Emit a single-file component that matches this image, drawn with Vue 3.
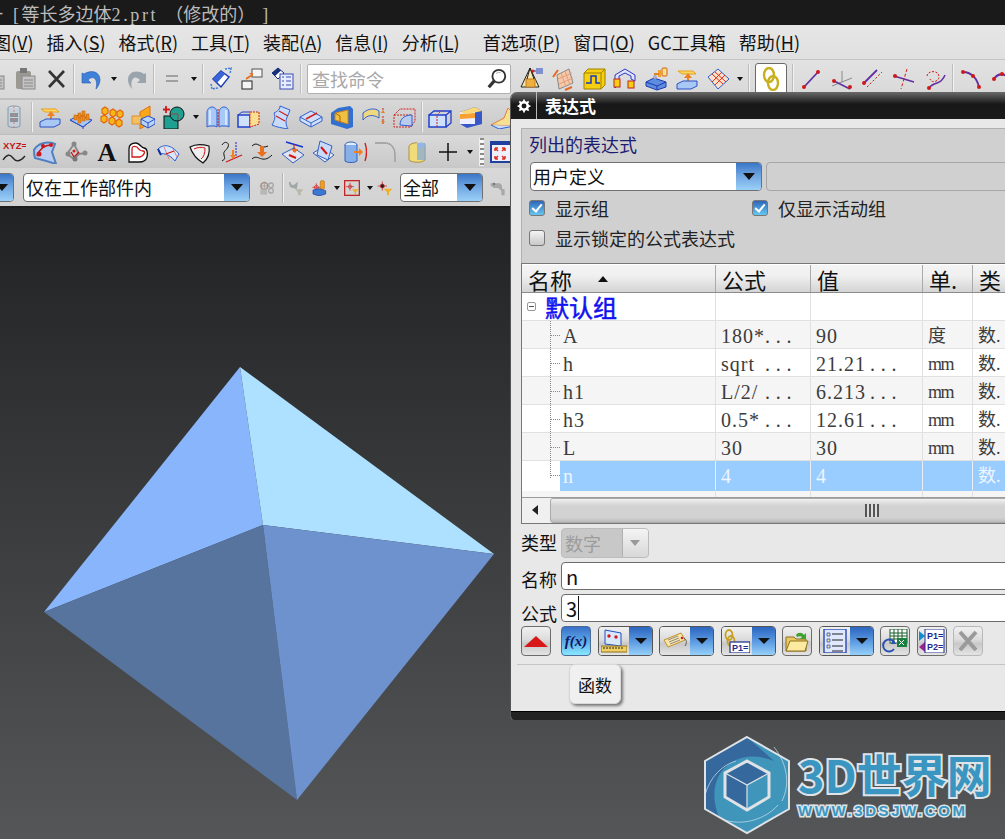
<template>
  <div class="app">
    <div class="titlebar">
      <span class="dash">-</span>
      <span class="title-text"><span class="lat">[</span>等长多边体<span class="lat">2.prt </span>（修改的）<span class="lat">  ]</span></span>
    </div>

    <div class="menubar">
      <span v-for="m in menus" :key="m.t" class="menu-item" :class="{ far: m.far }">{{ m.t }}<template v-if="m.k">(<u>{{ m.k }}</u>)</template></span>
    </div>

    <div class="toolrow row1">
      <template v-for="(it, i) in row1" :key="i">
        <span v-if="it === 'sep'" class="sep"></span>
        <span v-else-if="it === 'drop'" class="drop"></span>
        <div v-else-if="it === 'search'" class="search">
          <span>查找命令</span>
          <svg class="search-ic" viewBox="0 0 24 24">
            <circle cx="14" cy="9" r="7" fill="#fff" stroke="#333" stroke-width="2"/>
            <path d="M9 14 3 21" stroke="#333" stroke-width="3.5"/>
            <path d="M11 6a5 5 0 0 1 5-1" stroke="#aaa" fill="none"/>
          </svg>
        </div>
        <span v-else-if="it === 'chain'" class="chain-btn">
          <svg class="ic" viewBox="0 0 24 24" v-html="icons.chain"></svg>
        </span>
        <svg v-else class="ic" viewBox="0 0 24 24" v-html="icons[it]"></svg>
      </template>
    </div>

    <div class="toolrow row2">
      <template v-for="(it, i) in row2" :key="i">
        <span v-if="it === 'sep'" class="sep"></span>
        <span v-else-if="it === 'drop'" class="drop"></span>
        <svg v-else class="ic" viewBox="0 0 24 24" v-html="icons[it]"></svg>
      </template>
    </div>

    <div class="toolrow row3">
      <template v-for="(it, i) in row3" :key="i">
        <span v-if="it === 'grip'" class="grip"></span>
        <span v-else-if="it === 'drop'" class="drop"></span>
        <svg v-else class="ic" viewBox="0 0 24 24" v-html="icons[it]"></svg>
      </template>
    </div>

    <div class="filterrow">
      <div class="combo combo-clip"><span class="combo-text"></span><span class="combo-arrow"></span></div>
      <div class="combo combo-main"><span class="combo-text">仅在工作部件内</span><span class="combo-arrow"></span></div>
      <svg class="ic16 first16" viewBox="0 0 24 24" v-html="icons.selGrey"></svg>
      <span class="sep4"></span>
      <svg class="ic16" viewBox="0 0 24 24" v-html="icons.selFilter"></svg>
      <svg class="ic16" viewBox="0 0 24 24" v-html="icons.selPart"></svg>
      <span class="drop"></span>
      <svg class="ic16" viewBox="0 0 24 24" v-html="icons.selBox"></svg>
      <span class="drop"></span>
      <svg class="ic16" viewBox="0 0 24 24" v-html="icons.selCross"></svg>
      <div class="combo combo-all"><span class="combo-text">全部</span><span class="combo-arrow"></span></div>
      <svg class="ic16" viewBox="0 0 24 24" v-html="icons.selGrey2"></svg>
    </div>

    <div class="viewport">
      <svg class="solid" viewBox="0 0 1005 631">
        <polygon points="240,159 44,404 263,317" fill="#88b5fb"/>
        <polygon points="240,159 494,346 263,317" fill="#aee1ff"/>
        <polygon points="44,404 297,592 263,317" fill="#57749e"/>
        <polygon points="494,346 297,592 263,317" fill="#6e92ce"/>
      </svg>

      <div class="logo">
        <svg class="logo-hex" viewBox="0 0 90 100">
          <polygon points="45,2 87,26 87,74 45,98 3,74 3,26" fill="#3f95ba"/>
          <path d="M45 2 3 26v48l14 8C8 60 12 38 30 27c14-8 30-6 42-1L45 2Z" fill="#35699e"/>
          <path d="M20 84c22 6 50-4 58-22l9-4v16L45 98Z" fill="#3f95ba"/>
          <path d="M3 60C8 42 20 30 34 26M72 12C86 30 88 50 80 66M20 84C40 92 64 84 76 70" stroke="#cfe3ee" stroke-width=".7" fill="none"/>
          <polygon points="45,2 87,26 87,74 45,98 3,74 3,26" fill="none" stroke="#dfe3e6" stroke-width="2"/>
          <polygon points="45,26 67,38 67,62 45,75 23,62 23,38" fill="#35699e"/>
          <polygon points="45,50 67,38 67,62 45,75" fill="#3f95ba"/>
          <polygon points="45,26 67,38 67,62 45,75 23,62 23,38" fill="none" stroke="#dfe3e6" stroke-width="3"/>
          <path d="M23 38 45 50 67 38M45 50v25" stroke="#dfe3e6" stroke-width="1.2" fill="none"/>
        </svg>
        <div class="logo-words">
          <div class="logo-name">3D世界网</div>
          <div class="logo-url">WWW.3DSJW.COM</div>
        </div>
      </div>
    </div>

    <div class="dialog">
      <div class="dlg-title">
        <svg class="gear" viewBox="0 0 24 24">
          <circle cx="12" cy="12" r="6.5" fill="none" stroke="#fff" stroke-width="4.5"/>
          <path d="M12 1v4M12 19v4M1 12h4M19 12h4M4 4l3 3M17 17l3 3M20 4l-3 3M7 17l-3 3" stroke="#fff" stroke-width="3"/>
        </svg>
        <span class="dlg-title-sep"></span>
        <span class="dlg-title-text">表达式</span>
      </div>

      <div class="dlg-body">
        <div class="group">
          <div class="group-label">列出的表达式</div>
          <div class="group-combos">
            <div class="combo combo-list"><span class="combo-text">用户定义</span><span class="combo-arrow"></span></div>
            <div class="combo-empty"></div>
          </div>
          <div class="checks">
            <label class="check check-a"><span class="box on"></span>显示组</label>
            <label class="check"><span class="box on"></span>仅显示活动组</label>
          </div>
          <div class="checks checks-2">
            <label class="check"><span class="box"></span>显示锁定的公式表达式</label>
          </div>
        </div>

        <div class="table">
          <div class="trow thead">
            <div class="cell">名称<span class="sort"></span></div>
            <div class="cell">公式</div>
            <div class="cell">值</div>
            <div class="cell">单.</div>
            <div class="cell">类</div>
          </div>
          <div class="trow">
            <div class="cell group-cell"><span class="expander"></span><span class="group-name">默认组</span></div>
            <div class="cell"></div><div class="cell"></div><div class="cell"></div><div class="cell"></div>
          </div>
          <div v-for="(r, i) in rows" :key="r.name" class="trow data" :class="{ alt: i % 2 === 0, selected: r.sel }">
            <div class="cell name-cell">
              <span class="tree-v" :class="{ last: r.sel }"></span><span class="tree-h"></span>
              <span class="name-text">{{ r.name }}</span>
            </div>
            <div class="cell"><span class="fx-main">{{ r.formula }}</span><span v-if="r.fMore" class="dots">...</span></div>
            <div class="cell"><span class="val-main">{{ r.value }}</span><span v-if="r.vMore" class="dots">...</span></div>
            <div class="cell c-unit">{{ r.unit }}</div>
            <div class="cell c-type">数.</div>
          </div>
          <div class="trow blank alt">
            <div class="cell"></div><div class="cell"></div><div class="cell"></div><div class="cell"></div><div class="cell"></div>
          </div>
          <div class="hscroll">
            <span class="scroll-left"></span>
            <div class="scroll-thumb"><span class="thumb-grip"></span></div>
          </div>
        </div>

        <div class="form-row type-row">
          <span class="form-label">类型</span>
          <div class="select-off"><span>数字</span><span class="select-off-arrow"></span></div>
        </div>
        <div class="form-row name-row">
          <span class="form-label">名称</span>
          <div class="field">n</div>
        </div>
        <div class="form-row formula-row">
          <span class="form-label">公式</span>
          <div class="field"><span>3</span><span class="caret"></span></div>
        </div>

        <div class="btnrow">
          <span class="btn"><span class="tri-up"></span></span>
          <span class="btn active fx">f(x)</span>
          <span class="split"><span class="split-l"><svg class="ic-btn" viewBox="0 0 26 24" v-html="icons.measure"></svg></span><span class="split-r"></span></span>
          <span class="split"><span class="split-l"><svg class="ic-btn" viewBox="0 0 26 24" v-html="icons.tag"></svg></span><span class="split-r"></span></span>
          <span class="split"><span class="split-l"><svg class="ic-btn" viewBox="0 0 26 24" v-html="icons.p1link"></svg></span><span class="split-r"></span></span>
          <span class="btn"><svg class="ic-btn" viewBox="0 0 26 24" v-html="icons.folder"></svg></span>
          <span class="split"><span class="split-l"><svg class="ic-btn" viewBox="0 0 26 24" v-html="icons.list"></svg></span><span class="split-r"></span></span>
          <span class="btn"><svg class="ic-btn" viewBox="0 0 26 24" v-html="icons.excel"></svg></span>
          <span class="btn"><svg class="ic-btn" viewBox="0 0 26 24" v-html="icons.p1p2"></svg></span>
          <span class="btn off"><svg class="ic-btn" viewBox="0 0 26 24" v-html="icons.xGrey"></svg></span>
        </div>
        <div class="dlg-rule"></div>
        <div class="tooltip">函数</div>
      </div>
      <div class="dlg-foot"></div>
    </div>
  </div>
</template>

<script setup>
const menus = [
  { t: '图', k: 'V' },
  { t: '插入', k: 'S' },
  { t: '格式', k: 'R' },
  { t: '工具', k: 'T' },
  { t: '装配', k: 'A' },
  { t: '信息', k: 'I' },
  { t: '分析', k: 'L' },
  { t: '首选项', k: 'P', far: true },
  { t: '窗口', k: 'O' },
  { t: 'GC工具箱' },
  { t: '帮助', k: 'H' },
];

const row1 = [
  'pasteGrey', 'pasteGrey', 'xDark', 'sep', 'undo', 'drop', 'redo', 'sep', 'eq', 'drop', 'sep',
  'orient', 'windows', 'layers', 'sep', 'search',
  'pyramid', 'surfMesh', 'yellowBox', 'blueFrame', 'extract', 'padUp', 'gridSurf', 'drop', 'sep', 'chain',
  'sep', 'line', 'csys', 'parallel', 'cross', 'spiral', 'sep', 'arc', 'arc2',
];
const row2 = [
  'cyl', 'sep', 'padUp', 'dots', 'oranges', 'plane', 'boolean', 'drop',
  'book', 'boxCut', 'sweep', 'slab', 'shell', 'trim', 'wire', 'sep', 'boxLine', 'boxBand', 'corner',
];
const row3 = [
  'xyz', 'surfPts', 'nodes', 'bigA', 'outline', 'patch', 'leaf', 'curveA', 'curveB', 'projA', 'projB',
  'cylArrow', 'fillet', 'cylYellow', 'plus', 'drop', 'grip', 'fit',
];

const rows = [
  { name: 'A', formula: '180*', fMore: true, value: '90', unit: '度' },
  { name: 'h', formula: 'sqrt', fMore: true, value: '21.21', vMore: true, unit: 'mm' },
  { name: 'h1', formula: 'L/2/', fMore: true, value: '6.213', vMore: true, unit: 'mm' },
  { name: 'h3', formula: '0.5*', fMore: true, value: '12.61', vMore: true, unit: 'mm' },
  { name: 'L', formula: '30', value: '30', unit: 'mm' },
  { name: 'n', formula: '4', value: '4', unit: '', sel: true },
];

const icons = {
  pasteGrey: '<rect x="3" y="4" width="15" height="18" rx="2" fill="#9a9a92"/><rect x="7" y="1" width="7" height="5" fill="#777"/><rect x="9" y="9" width="13" height="13" fill="#c4c4c4" stroke="#888"/><path d="M11 13h9M11 16h9M11 19h9" stroke="#888"/>',
  xDark: '<path d="M5 4 20 20M20 4 5 20" stroke="#333" stroke-width="2.6"/>',
  undo: '<path d="M4 7c8-5 16-2 16 6 0 3-2 7-4 9 1-5 1-9-2-11-2-1-4 0-6 2l3 3H2V6Z" fill="#3f80d8" stroke="#2a5cb0" stroke-width=".6"/>',
  redo: '<path d="M20 7C12 2 4 5 4 13c0 3 2 7 4 9-1-5-1-9 2-11 2-1 4 0 6 2l-3 3h9V6Z" fill="#9aa4ac"/>',
  eq: '<path d="M6 9h12M6 14h12" stroke="#a0a0a0" stroke-width="2"/>',
  orient: '<path d="M12 4 20 10 12 20 4 12Z" fill="#fff" stroke="#1c3fb0" stroke-width="1.5"/><path d="M12 4 16 7 8 16 4 12Z" fill="#3a64d8"/><path d="M16 2 22 1 21 7M2 17l1 5 6-1" stroke="#3a7ad8" stroke-width="1.5" stroke-dasharray="2 1" fill="none"/>',
  windows: '<rect x="12" y="2" width="10" height="8" fill="#f4f4f4" stroke="#555"/><rect x="2" y="14" width="10" height="8" fill="#f4f4f4" stroke="#222"/><path d="M6 12l6-4" stroke="#e87020" stroke-width="2"/><path d="M9 6h4v3" fill="#e87020"/>',
  layers: '<path d="M7 1 13 6 7 12 1 6Z" fill="#fff" stroke="#14307c"/><path d="M7 1 10 3.500 4 9 1 6Z" fill="#17307c"/><rect x="9" y="7" width="13" height="15" fill="#e6ecff" stroke="#3a4cb0"/><path d="M11 10h2M15 10h5M11 14h2M15 14h5M11 18h2M15 18h5" stroke="#3a4cb0"/>',
  pyramid: '<path d="M10 1 1 20h18Z" fill="#f8e6b0" stroke="#222"/><rect x="6" y="12" width="9" height="8" fill="#f0b040" stroke="#c08020"/><path d="M10 1l4 11M10 1 7 12" stroke="#222" fill="none"/><path d="M13 4h10M16 2h7M16 6h7" stroke="#2040c0"/><circle cx="13" cy="4" r="1.500" fill="#d22"/>',
  surfMesh: '<path d="M6 8 18 2l4 14-14 6Z" fill="#f6c8a8" stroke="#888"/><path d="M10 6l5 14M14 4l5 14M7 12l14-6M8 17l14-6" stroke="#e0a080"/><path d="M2 10 7 3M14 23l7-3" stroke="#e86820" stroke-width="2"/>',
  yellowBox: '<path d="M2 6 6 2H23V18L19 22H2Z" fill="#f6d010" stroke="#a08000"/><path d="M2 6H19V22M19 6 23 2" stroke="#a08000" fill="none"/><path d="M4 16H9V9H14V16H18" stroke="#1838c0" stroke-width="1.5" fill="none"/>',
  blueFrame: '<path d="M2 8 12 2 22 8V14L18 12V9L12 6 6 9V17L2 21Z" fill="#dde4fb" stroke="#3038c0"/><rect x="1" y="12" width="6" height="8" fill="#f6d010" stroke="#c02020"/><rect x="15" y="14" width="6" height="7" fill="#f6d010" stroke="#c02020"/>',
  extract: '<path d="M2 15 10 11l12 4v5l-9 3-11-4Z" fill="#5d8ce0" stroke="#1e3cae"/><path d="M2 15l11 4 9-4M13 19v4" stroke="#1e3cae" fill="none"/><circle cx="11" cy="10" r="2" fill="#aac"/><rect x="14" y="3" width="3" height="7" fill="#f0a030"/><rect x="18" y="1" width="5" height="8" rx="1" fill="#f6e090" stroke="#d06010"/><path d="M10 7h5" stroke="#e08020" stroke-width="2"/>',
  padUp: '<path d="M3 4h15l3 3H7Z" fill="#fcd860" stroke="#e8a020"/><path d="M12 18V11H9l4-5 4 5h-3v7Z" fill="#f08020"/><path d="M2 17 8 14h14v5l-6 3H2Z" fill="#a8c8f5" stroke="#2a50c8"/>',
  gridSurf: '<path d="M2 10 12 2 23 12 12 22Z" fill="#fde0c8" stroke="#3060d0"/><path d="M6 7l11 10M9 5l11 10M6 15 16 5M9 18 19 8" stroke="#e03020"/>',
  chain: '<ellipse cx="10" cy="8" rx="5" ry="7" fill="none" stroke="#c8b020" stroke-width="2.4"/><ellipse cx="14" cy="16" rx="5" ry="7" fill="none" stroke="#c8b020" stroke-width="2.4"/>',
  line: '<path d="M5 20 19 5" stroke="#6030a0" stroke-width="1.8"/><circle cx="5" cy="20" r="2" fill="#d01818"/><circle cx="19" cy="5" r="2" fill="#d01818"/>',
  csys: '<path d="M12 4V15M12 15 22 11M12 15 2 19" stroke="#888"/><path d="M4 14 20 22" stroke="#6030a0" stroke-width="1.8"/><circle cx="4" cy="14" r="2" fill="#d01818"/><circle cx="20" cy="20" r="2" fill="#d01818"/>',
  parallel: '<path d="M3 16 16 3" stroke="#6030a0" stroke-width="1.8"/><path d="M6 20 21 5" stroke="#d01818" stroke-dasharray="2 2"/><circle cx="3" cy="16" r="2" fill="#d01818"/>',
  cross: '<path d="M2 9 22 15" stroke="#6030a0" stroke-width="1.8"/><path d="M15 2 9 22" stroke="#d01818" stroke-dasharray="3 2"/><circle cx="3" cy="9" r="2" fill="#d01818"/>',
  spiral: '<path d="M4 9c1-6 12-6 12 1 0 4-7 7-9 2" stroke="#d01818" stroke-dasharray="2 1.500" fill="none"/><path d="M6 21c2-3 5-4 8-5 3-1 6-3 8-8" stroke="#6030a0" stroke-width="1.500" fill="none"/><circle cx="6" cy="21" r="2" fill="#d01818"/>',
  arc: '<path d="M4 5C12 5 18 11 20 20" stroke="#6030a0" stroke-width="2" fill="none"/><circle cx="4" cy="5" r="2" fill="#d01818"/><circle cx="14" cy="9" r="2" fill="#d01818"/><circle cx="20" cy="20" r="2" fill="#d01818"/>',
  arc2: '<path d="M4 12C10 3 18 9 24 14" stroke="#6030a0" stroke-width="2" fill="none"/><circle cx="4" cy="12" r="2" fill="#d01818"/><circle cx="12" cy="7" r="2" fill="#d01818"/>',
  cyl: '<ellipse cx="12" cy="3" rx="6" ry="2" fill="#d8dee4" stroke="#8898a8"/><path d="M6 3V21c2 2 10 2 12 0V3" fill="#c4d0dc" stroke="#8898a8"/><path d="M8 9h8M8 11h8M8 14h8M8 16h8" stroke="#555" stroke-width="1.200"/><path d="M12 1v22" stroke="#d08080" stroke-dasharray="2 2"/>',
  dots: '<path d="M1 15 10 10l13 5-9 7Z" fill="#a8c8f5" stroke="#2a50c8"/><path d="M1 15 14 22v2M14 22 23 15" stroke="#2a50c8" fill="none"/><g fill="#e88a20" stroke="#c06010" stroke-width=".5"><rect x="5" y="10" width="3" height="5"/><rect x="9" y="8" width="3" height="5"/><rect x="13" y="6" width="3" height="5"/><rect x="9" y="13" width="3" height="5"/><rect x="13" y="11" width="3" height="5"/><rect x="17" y="9" width="3" height="6"/></g>',
  oranges: '<g fill="#f6b818" stroke="#e46008" stroke-width="1.100"><path d="M2 4 5 2l3 2v4L5 10 2 8Z"/><path d="M10 6l3-2 3 2v4l-3 2-3-2Z"/><path d="M17 7l3-2 3 2v4l-3 2-3-2Z"/><path d="M1 12l3-2 3 2v4l-3 2-3-2Z"/><path d="M9 14l3-2 3 2v4l-3 2-3-2Z"/><path d="M16 16l3-2 3 2v4l-3 2-3-2Z"/></g>',
  plane: '<path d="M9 7 19 1V18L9 24Z" fill="#f8a818" stroke="#e07010"/><path d="M1 11h10v8H1Z" fill="#f2c060" stroke="#e09030"/><path d="M10 14 17 11l7 3v5l-7 4-7-4Z" fill="#b8d4f8" stroke="#2a50c8"/><path d="M10 14l7 4 7-4M17 18v5" stroke="#2a50c8" fill="none"/>',
  boolean: '<rect x="2" y="11" width="14" height="13" fill="#20a090" stroke="#111"/><circle cx="15" cy="9" r="7" fill="#20a090" stroke="#111"/><path d="M9 9h7v6" fill="none" stroke="#a04040"/><path d="M4 1v7M1 4.500h7" stroke="#d01818" stroke-width="1.800"/>',
  book: '<path d="M1 22V8c0-8 10-8 10 0v14l-2-1H3Z" fill="#a8c8f8" stroke="#3060d0"/><path d="M23 22V8c0-8-10-8-10 0v14l2-1h6Z" fill="#a8c8f8" stroke="#3060d0"/><path d="M12 4v17" stroke="#d02020" stroke-dasharray="2 1"/><path d="M4 5v15M20 5v15" stroke="#e4eeff" stroke-width="1.500"/>',
  boxCut: '<path d="M1 10h12v12H1Z" fill="#cfe0fa" stroke="#2040d0" stroke-width="1.500"/><path d="M13 7h9v12l-9 3Z" fill="#f8e090" stroke="#d02020" stroke-dasharray="2 1"/><path d="M1 10 5 7h8" stroke="#2040d0" fill="none"/>',
  sweep: '<path d="M6 8c4-2 6-4 6-7l10 4c-2 6-4 8-4 12 0 3 1 5 2 7-6-1-12-2-16-4 2-4 4-7 2-12Z" fill="#c8dcfa" stroke="#3060d0"/><path d="M11 6 20 11M8 11l9 5" stroke="#d02020" stroke-width="1.300"/>',
  slab: '<path d="M1 12 12 6l11 6v4l-11 6-11-6Z" fill="#d0e0fa" stroke="#3060d0"/><path d="M1 12 12 18 23 12M12 18v4" stroke="#3060d0" fill="none"/><path d="M7 14 18 8" stroke="#d02020" stroke-width="1.500"/>',
  shell: '<path d="M1 8 8 3 20 1l3 3v18l-6 2-16-5Z" fill="#3070d0"/><path d="M5 8 18 5v14L5 15Z" fill="#f0c040" stroke="#d08020"/><path d="M5 8l5 3v7" stroke="#b06010" fill="none"/>',
  trim: '<path d="M2 8C8 3 14 3 18 6v7C12 9 6 10 2 15Z" fill="#f0d880" stroke="#3060d0"/><path d="M22 3v3M22 11v8" stroke="#d02020" stroke-dasharray="2 1"/><path d="M20 8l2-3 2 3M20 16l2 3 2-3" fill="#e08020"/>',
  wire: '<path d="M2 10h17v12H2Z" fill="none" stroke="#d02020" stroke-dasharray="2 1"/><path d="M2 10 8 4h15v12l-4 6" fill="none" stroke="#d02020" stroke-dasharray="2 1"/><path d="M8 20c0-6 4-10 12-10v11Z" fill="#b8ccf0" stroke="#3060d0"/>',
  boxLine: '<path d="M1 10h17v12H1Z" fill="#cfe0fa" stroke="#2040d0" stroke-width="1.500"/><path d="M1 10 6 6h17v12l-5 4M18 10l5-4" stroke="#2040d0" stroke-width="1.300" fill="none"/><path d="M9 22V10l4-4" stroke="#d02020" stroke-dasharray="2 1" fill="none"/>',
  boxBand: '<path d="M1 7 16 2l7 4v13L8 23 1 19Z" fill="#3858c8"/><path d="M1 7h15v12H1Z" fill="#eef0ff"/><path d="M1 9l15-1v5L1 14Z" fill="#f8a030"/><path d="M1 7 16 2l7 4-15 3Z" fill="#f8d878"/>',
  corner: '<path d="M1 20 14 13 18 3l6 6v12Z" fill="#f8e090" stroke="#e08040"/><path d="M1 20l8 4 15-3" fill="#c8dcfa" stroke="#3060d0"/>',
  xyz: '<text x="1" y="9" font-family="Liberation Sans" font-size="9.500" font-weight="700" fill="#c01818">XYZ=</text><path d="M1 20c4-6 7-6 10-2s7 4 12-2" stroke="#222" fill="none" stroke-width="1.300"/>',
  surfPts: '<path d="M1 10C5 3 14 1 22 4L19 12l4 12C14 21 6 19 2 18 1 15 1 12 1 10Z" fill="#b8ccf0" stroke="#5080c0" stroke-width="2"/><path d="M4 16C7 8 12 5 18 5" stroke="#c01818" stroke-width="1.500" fill="none"/><circle cx="6" cy="14" r="2.500" fill="#d01818"/><circle cx="10" cy="6" r="2" fill="#d01818"/><circle cx="18" cy="5" r="2" fill="#d01818"/>',
  nodes: '<path d="M3 14 10 4l5 10 7-1M3 14l7 5 5-5M10 4l0 0" stroke="#888" stroke-width="1.800" fill="none"/><path d="M7 12l3 5 5-5" stroke="#c01818" stroke-width="1.300" fill="none"/><circle cx="4" cy="14" r="2.500" fill="#888"/><circle cx="10" cy="4" r="2.500" fill="#888"/><circle cx="11" cy="19" r="2.500" fill="#777"/><circle cx="21" cy="13" r="2.500" fill="#888"/><circle cx="10" cy="11" r="1.500" fill="#d01818"/>',
  bigA: '<text x="12" y="21" text-anchor="middle" font-family="Liberation Serif" font-size="26" font-weight="700" fill="#111">A</text>',
  outline: '<path d="M3 22V9c0-4 3-6 7-6s5 5 8 5 4 5 3 9-4 5-8 5Z" fill="#fff" stroke="#111" stroke-width="1.300"/><path d="M6 17V9c0-3 2-3 5-2 2 3 3 4 6 4s1 5-3 6Z" fill="none" stroke="#d01818" stroke-width="1.300"/>',
  patch: '<path d="M1 9C6 4 14 4 22 14L18 21C12 14 7 13 3 14Z" fill="#dce6fa" stroke="#3060d0"/><path d="M1 9l3 6" stroke="#1030a0" stroke-width="2"/><path d="M7 7 12 19M16 9 20 17" stroke="#e08080"/><path d="M9 14 17 11" stroke="#d01818" stroke-width="1.300"/>',
  leaf: '<path d="M2 7C7 4 14 4 21 6c1 7-1 13-6 17C10 20 5 16 2 7Z" fill="#efeff0" stroke="#111" stroke-width="1.200"/><path d="M6 9c4-2 8-2 11-1 0 5-1 9-4 11" stroke="#d01818" fill="none"/>',
  curveA: '<path d="M3 5c3-5 8-2 6 2s-5 4-4 8 1 4-2 6" stroke="#111" fill="none"/><path d="M17 2v14" stroke="#2020d0" stroke-dasharray="2 1"/><path d="M7 22 23 15" stroke="#d01818" stroke-width="1.300"/><path d="M11 15h6l-3 4Z" fill="#f08020"/><path d="M13 10h2v6h-2Z" fill="#f08020"/>',
  curveB: '<path d="M2 6c6-6 8 4 16 0M2 19c6-6 10 6 20-4" stroke="#111" fill="none"/><path d="M10 6h4v6h3l-5 5-5-5h3Z" fill="#e87020"/>',
  projA: '<path d="M1 14 13 8l10 7-11 8Z" fill="#e4e4f0" stroke="#3060c0"/><path d="M8 15 15 18" stroke="#d01818" stroke-width="2"/><path d="M5 2 22 7" stroke="#1030d0" stroke-width="1.500"/><path d="M13 4v8" stroke="#d01818"/><path d="M10 9h7l-3 4Z" fill="#e87020"/>',
  projB: '<path d="M1 13 11 7l11 8-9 7Z" fill="#eaeaf4" stroke="#3060c0"/><path d="M8 1 20 6 16 20 5 15Z" fill="#c8dcfa" stroke="#3060c0"/><path d="M9 7l6 7" stroke="#d01818" stroke-width="2"/>',
  cylArrow: '<ellipse cx="8" cy="5" rx="6" ry="3" fill="#e0ecfc" stroke="#3060c0"/><path d="M2 5V21c2 2 10 2 12 0V5" fill="#88b0e8" stroke="#3060c0"/><path d="M11 12h7" stroke="#f08020" stroke-width="2"/><path d="M16 8l4 4-4 4Z" fill="#f08020"/><path d="M22 3c2 6 2 12 0 18" stroke="#d01818" stroke-width="1.300" fill="none"/>',
  fillet: '<path d="M1 3h10c6 0 10 5 10 11v8" stroke="#999" stroke-width="1.300" fill="none"/><path d="M12 3c6 1 9 5 10 11" stroke="#bbb" stroke-dasharray="1 1" fill="none"/>',
  cylYellow: '<path d="M4 6c2-4 12-4 16-2v16c-4 3-12 3-16 0Z" fill="#f0dc78" stroke="#b09040"/><path d="M12 2c5 0 8 1 8 3s-3 3-8 3Z" fill="#c0d8f4"/><path d="M12 3h8v17h-8Z" fill="#80a8e0" opacity=".7"/>',
  plus: '<path d="M12 3v18M3 12h18" stroke="#111" stroke-width="1.500"/>',
  fit: '<rect x="1" y="2" width="30" height="20" fill="#eef0fc" stroke="#2040a0" stroke-width="2"/><rect x="1" y="2" width="30" height="3" fill="#2040a0"/><path d="M5 8l3 3M5 8h3M5 8v3M15 8l-3 3M15 8h-3M15 8v3M5 19l3-3M5 19h3M5 19v-3M15 19l-3-3M15 19h-3M15 19v-3" stroke="#e03020" stroke-width="1.500" fill="none"/>',
  selGrey: '<circle cx="8" cy="9" r="5" fill="none" stroke="#a09088" stroke-width="2"/><path d="M8 2v14M1 9h14" stroke="#a09088"/><rect x="2" y="14" width="10" height="8" fill="#b8b8b8"/><circle cx="18" cy="8" r="3.500" fill="none" stroke="#a8a8a8" stroke-width="2"/><circle cx="18" cy="16" r="3.500" fill="none" stroke="#a8a8a8" stroke-width="2"/>',
  selFilter: '<path d="M3 3c-1 4 1 6 6 6l4-3-1 6-9-3" fill="none" stroke="#a0a8a8" stroke-width="3"/><path d="M11 14h12l-4 5v4h-4v-4Z" fill="#b8b8a8"/>',
  selPart: '<path d="M8 5v12M2 11h12" stroke="#d01818"/><circle cx="8" cy="11" r="3" fill="none" stroke="#d01818"/><rect x="14" y="1" width="6" height="13" rx="2" fill="#f0a020" stroke="#c07010"/><path d="M3 15 12 13l10 3v5l-10 3-9-3Z" fill="#3c78d0" stroke="#1838a0"/>',
  selBox: '<rect x="1" y="1" width="22" height="22" fill="none" stroke="#c01818" stroke-width="1.800"/><path d="M9 4v12M3 10h12" stroke="#d01818"/><circle cx="9" cy="10" r="2.500" fill="none" stroke="#d01818"/><path d="M12 14h10l-4 4v4h-2v-4Z" fill="#e8b020"/>',
  selCross: '<path d="M8 2v14M1 9h14" stroke="#c01818"/><circle cx="8" cy="9" r="3" fill="#222" stroke="#d01818"/><path d="M10 13h13l-5 5v5h-3v-5Z" fill="#f0b020"/>',
  selGrey2: '<path d="M1 5h14l3 3v5l4 1v9h-5V16l-5-4H6L1 9Z" fill="#a8a8a8"/><circle cx="6" cy="6" r="2" fill="#777"/>',
  measure: '<path d="M4 1 20 4v13L4 15Z" fill="#d8e8fa" stroke="#2050c0"/><circle cx="8" cy="7" r="1.700" fill="#d01818"/><circle cx="15" cy="8" r="1.700" fill="#d01818"/><rect x="0" y="17" width="26" height="6" fill="#f0d060" stroke="#907020"/><path d="M3 18v2M6 18v2M9 18v2M12 18v2M15 18v2M18 18v2M21 18v2" stroke="#222"/>',
  tag: '<path d="M2 11 19 4l4 7-17 7Z" fill="#fbe6a8" stroke="#c09030"/><path d="M6 11l10-4M7 13l10-4M8 15l10-4" stroke="#888"/><circle cx="20" cy="9" r="1.300" fill="#d02020"/><path d="M22 9c3 2 3 5 1 8" stroke="#555" fill="none"/>',
  p1link: '<ellipse cx="5" cy="6" rx="3.500" ry="5" fill="none" stroke="#c8a020" stroke-width="1.800"/><ellipse cx="7" cy="12" rx="3.500" ry="5" fill="none" stroke="#c8a020" stroke-width="1.800"/><rect x="6" y="13" width="20" height="11" fill="#fff" stroke="#1c2c90" stroke-width="1.200"/><text x="8" y="22" font-family="Liberation Sans" font-weight="700" font-size="9" fill="#1c2c90">P1=</text>',
  folder: '<path d="M2 8h8l2 2h10v12H2Z" fill="#e8c860" stroke="#907020"/><path d="M2 22 6 12h18l-3 10Z" fill="#fbeaa0" stroke="#907020"/><path d="M12 6c2-3 6-3 8 0l2-2v6h-6l2-2c-1-1-3-1-5 0Z" fill="#40a030"/>',
  list: '<rect x="2" y="0" width="22" height="24" fill="#dfe8fc" stroke="#3450b8" stroke-width="1.500"/><path d="M10 5h11M10 11h11M10 17h11M10 22h11" stroke="#222"/><path d="M5 4h3v3H5ZM5 10h3v3H5ZM5 16h3v3H5Z" fill="#f4e090" stroke="#3450b8" stroke-width=".8"/>',
  excel: '<rect x="8" y="0" width="17" height="14" fill="#fff" stroke="#1a5c2a"/><path d="M8 4h17M8 7h17M8 10h17M12 0v14M16 0v14M20 0v14" stroke="#1a5c2a"/><path d="M15 9h10v9H15Z" fill="#1a8040"/><path d="M17 11 22 16M22 11 17 16" stroke="#fff"/><path d="M12 20a6 6 0 1 1 0-7" fill="none" stroke="#2a50b0" stroke-width="2"/><path d="M11 10l3 5-5 0Z" fill="#2a50b0"/>',
  p1p2: '<path d="M0 2 6 7 0 12Z" fill="#1090c8"/><path d="M6 13 0 18l6 5Z" fill="#a02090"/><rect x="6" y="0" width="19" height="24" fill="#fff" stroke="#1c2c90"/><text x="8" y="10" font-family="Liberation Sans" font-weight="700" font-size="9" fill="#1c2c90">P1=</text><text x="8" y="21" font-family="Liberation Sans" font-weight="700" font-size="9" fill="#1c2c90">P2=</text>',
  xGrey: '<path d="M5 3 21 21M21 3 5 21" stroke="#9a9a9a" stroke-width="4"/>',
};
</script>

<style>
html, body {
  margin: 0;
  padding: 0;
  overflow: hidden;
}
</style>

<style scoped>
.app {
  position: relative;
  width: 1005px;
  height: 839px;
  overflow: hidden;
  display: flex;
  flex-direction: column;
  font-family: "Noto Sans CJK SC", "Liberation Sans", sans-serif;
  font-size: 18px;
  color: #111;
  background: #d8d8d8;
}

.titlebar {
  height: 25px;
  flex: none;
  display: flex;
  align-items: center;
  overflow: hidden;
  background: #1a1a1a;
  color: #bcbcbc;
  font-size: 18px;
  white-space: nowrap;
}
.dash {
  width: 13px;
  margin-left: -3px;
  font-family: "Liberation Serif", serif;
}
.title-text {
  margin-left: 3px;
}
.lat {
  font-family: "Liberation Serif", serif;
  letter-spacing: 2.6px;
  white-space: pre;
}

.menubar {
  height: 35px;
  flex: none;
  display: flex;
  align-items: center;
  gap: 13px;
  margin-left: -7px;
  background: linear-gradient(#e6e6e6, #e0e0e0);
  border-bottom: 1px solid #c4c4c4;
  box-sizing: border-box;
  white-space: nowrap;
}
.menu-item {
  line-height: 22px;
  font-size: 18px;
}
.menu-item.far {
  margin-left: 10px;
}

.toolrow {
  display: flex;
  align-items: center;
  gap: 7px;
  flex: none;
  box-sizing: border-box;
  white-space: nowrap;
}
.row1 {
  height: 40px;
  margin-left: -18px;
  background: linear-gradient(#e2e2e2, #d8d8d8);
  border-bottom: 2px solid #c0c0c0;
  width: 1200px;
}
.row2 {
  height: 35px;
  padding-left: 2px;
  background: linear-gradient(#d8d8d8, #c8c8c8);
  border-bottom: 1px solid #bcbcbc;
  width: 1200px;
}
.row3 {
  height: 33px;
  padding-left: 2px;
  background: linear-gradient(#dadada, #c8c8c8);
  width: 1200px;
}
.ic {
  width: 24px;
  height: 24px;
  flex: none;
}
.sep {
  width: 2px;
  height: 30px;
  flex: none;
  margin: 0 -2px;
  background: #f2f2f2;
  border-left: 1px solid #bdbdbd;
  box-sizing: border-box;
}
.drop {
  width: 0;
  height: 0;
  flex: none;
  border: 3px solid transparent;
  border-top: 4px solid #111;
  border-bottom: 0;
}
.grip {
  width: 5px;
  height: 28px;
  flex: none;
  margin: 0 -1px 0 -1px;
  background: repeating-linear-gradient(#8c8c8c 0 2px, #f6f6f6 2px 5px);
  border-left: 1px solid #f0f0f0;
  box-sizing: border-box;
}

.search {
  width: 204px;
  height: 30px;
  flex: none;
  margin-right: 2px;
  box-sizing: border-box;
  display: flex;
  align-items: center;
  justify-content: space-between;
  padding: 0 2px 0 4px;
  background: #fff;
  border: 1px solid #b0b0b0;
  border-radius: 2px;
  color: #a8a8a8;
  font-size: 18px;
}
.search-ic {
  width: 22px;
  height: 22px;
}
.chain-btn {
  width: 32px;
  height: 32px;
  flex: none;
  box-sizing: border-box;
  display: flex;
  align-items: center;
  justify-content: center;
  background: #fff;
  border: 1px solid #6a6a6a;
  border-radius: 3px;
}

.filterrow {
  height: 40px;
  flex: none;
  box-sizing: border-box;
  display: flex;
  align-items: center;
  gap: 7px;
  background: linear-gradient(#d8d8d8, #d2d2d2);
  border-bottom: 2px solid #1c1c1c;
  padding-top: 1px;
  width: 1200px;
}
.filterrow .drop {
  margin-right: -3px;
}
.ic16 {
  width: 16px;
  height: 16px;
  flex: none;
}
.first16 {
  margin-left: 2px;
}
.sep4 {
  width: 1px;
  height: 30px;
  margin: 0 -3px 0 0;
  background: #b4b4b4;
  border-right: 1px solid #f0f0f0;
}

.combo {
  height: 29px;
  flex: none;
  box-sizing: border-box;
  display: flex;
  background: #fff;
  border: 1px solid #707070;
  border-radius: 4px;
  overflow: hidden;
}
.combo-text {
  flex: 1;
  padding-left: 2px;
  line-height: 27px;
  font-size: 18px;
}
.combo-arrow {
  position: relative;
  width: 25px;
  flex: none;
  background: linear-gradient(#3a76c8 0, #6ea4e0 45%, #9ad0f8 100%);
}
.combo-arrow::after {
  content: "";
  position: absolute;
  left: 7px;
  top: 10px;
  border: 6px solid transparent;
  border-top: 7px solid #111;
  border-bottom: 0;
}
.combo-clip {
  width: 28px;
  margin-left: -14px;
  margin-right: 2px;
}
.combo-main {
  width: 227px;
}
.combo-all {
  width: 83px;
}

.viewport {
  flex: 1;
  position: relative;
  background: linear-gradient(#202224, #555658);
}
.solid {
  width: 1005px;
  height: 631px;
  display: block;
}

.logo {
  position: absolute;
  left: 702px;
  bottom: 4px;
  display: flex;
  gap: 6px;
  align-items: center;
}
.logo-hex {
  width: 90px;
  height: 100px;
  flex: none;
}
.logo-words {
  display: flex;
  flex-direction: column;
  align-items: flex-start;
}
.logo-name {
  font-size: 45px;
  line-height: 46px;
  font-weight: 700;
  white-space: nowrap;
  color: #3a96c0;
  -webkit-text-stroke: 4px #dfe4e8;
  paint-order: stroke fill;
}
.logo-url {
  margin-top: 5px;
  font-family: "Liberation Sans", sans-serif;
  font-size: 15px;
  line-height: 17px;
  font-weight: 700;
  letter-spacing: 2.6px;
  white-space: nowrap;
  color: #3a96c0;
  -webkit-text-stroke: 3px #dfe4e8;
  paint-order: stroke fill;
}

.dialog {
  position: absolute;
  left: 510px;
  top: 92px;
  width: 520px;
  height: 628px;
  display: flex;
  flex-direction: column;
  background: #e8e8e8;
  border-radius: 7px 0 0 4px;
  overflow: hidden;
  border-left: 1px solid #555;
  box-sizing: border-box;
}
.dlg-title {
  height: 27px;
  flex: none;
  display: flex;
  align-items: center;
  background: linear-gradient(#6a6a6a 0, #333 30%, #181818 45%, #1a1a1a 100%);
}
.gear {
  width: 14px;
  height: 14px;
  margin-left: 6px;
}
.dlg-title-sep {
  width: 1px;
  height: 27px;
  margin-left: 5px;
  background: #bbb;
}
.dlg-title-text {
  margin-left: 8px;
  color: #fff;
  font-size: 17px;
  font-weight: 700;
}
.dlg-body {
  flex: 1;
  position: relative;
  display: flex;
  flex-direction: column;
  padding: 9px 0 0 10px;
}

.group {
  height: 135px;
  flex: none;
  box-sizing: border-box;
  padding: 3px 0 0 7px;
  background: #d0d0d0;
  border-left: 1px solid #b0b0b0;
  border-top: 1px solid #b0b0b0;
}
.group-label {
  height: 30px;
  line-height: 24px;
  color: #1c1c70;
  font-size: 18px;
}
.group-combos {
  display: flex;
  gap: 4px;
  margin-left: 1px;
}
.combo-list {
  width: 232px;
}
.combo-empty {
  width: 300px;
  height: 29px;
  box-sizing: border-box;
  background: #d0d0d0;
  border: 1px solid #a6a6a6;
  border-radius: 4px;
}
.checks {
  display: flex;
  margin-top: 2px;
  height: 30px;
  align-items: center;
}
.checks-2 {
  margin-top: 0;
}
.check {
  display: flex;
  align-items: center;
  color: #222;
  font-size: 18px;
  white-space: nowrap;
}
.check-a {
  width: 223px;
}
.box {
  width: 16px;
  height: 16px;
  margin-right: 10px;
  box-sizing: border-box;
  border: 1px solid #777;
  border-radius: 3px;
  background: linear-gradient(#f4f4f4, #c8c8c8);
  position: relative;
}
.box.on {
  background: linear-gradient(#2f66b8, #66c8f0);
}
.box.on::after {
  content: "";
  position: absolute;
  left: 4px;
  top: 1px;
  width: 4px;
  height: 8px;
  border: solid #fff;
  border-width: 0 2px 2px 0;
  transform: rotate(40deg);
}

.table {
  height: 261px;
  flex: none;
  box-sizing: border-box;
  border: 1px solid #777;
  border-right: 0;
  padding-top: 1px;
  background: #fff;
  font-family: "Liberation Serif", "Noto Sans CJK SC", serif;
  font-size: 20px;
  letter-spacing: 1px;
  color: #3c3c3c;
}
.trow {
  display: grid;
  grid-template-columns: 194px 95px 112px 50px 60px;
  height: 28px;
  box-sizing: border-box;
  border-bottom: 1px solid #e0e0e0;
  background: #fff;
}
.trow.alt {
  background: #f5f5f5;
}
.cell {
  border-right: 1px solid #e0e0e0;
  padding-left: 5px;
  line-height: 30px;
  white-space: nowrap;
  overflow: hidden;
  position: relative;
}
.fx-main {
  display: inline-block;
  min-width: 44px;
}
.val-main {
  display: inline-block;
  min-width: 54px;
}
.dots {
  letter-spacing: 5.8px;
}
.c-unit {
  font-size: 18px;
  letter-spacing: -1.5px;
}
.c-type {
  font-size: 18px;
  letter-spacing: 0;
}
.thead {
  height: 28px;
  background: linear-gradient(#f4f4f4, #f0f0f0 40%, #d4d4d4);
  border-bottom: 1px solid #8c8c8c;
  color: #111;
  font-family: "Noto Sans CJK SC", sans-serif;
  letter-spacing: 0;
}
.thead .cell {
  border-right: 1px solid #aaa;
  padding-left: 6px;
  font-size: 22px;
  line-height: 28px;
}
.sort {
  position: absolute;
  left: 76px;
  top: 11px;
  border: 5px solid transparent;
  border-bottom: 6px solid #111;
  border-top: 0;
}
.group-cell {
  padding-left: 23px;
}
.expander {
  position: absolute;
  left: 5px;
  top: 9px;
  width: 9px;
  height: 9px;
  box-sizing: border-box;
  border: 1px solid #999;
  border-radius: 2px;
  background: linear-gradient(90deg, transparent 1px, #555 1px, #555 6px, transparent 6px) center / 100% 1px no-repeat;
}
.group-name {
  display: inline-block;
  vertical-align: top;
  font-family: "Noto Sans CJK SC", sans-serif;
  font-size: 24px;
  letter-spacing: 0;
  -webkit-text-stroke: .5px #1010f0;
  color: #1010f0;
  line-height: 27px;
}
.name-cell {
  padding-left: 41px;
  overflow: visible;
}
.tree-v {
  position: absolute;
  left: 28px;
  top: 0;
  bottom: -1px;
  border-left: 1px dotted #888;
}
.tree-v.last {
  bottom: 13px;
  z-index: 2;
}
.tree-h {
  position: absolute;
  left: 29px;
  top: 14px;
  width: 9px;
  border-top: 1px dotted #888;
}
.name-text {
  position: relative;
}
.trow.selected {
  background: transparent;
  color: #eef6ff;
}
.trow.selected .cell {
  background: #99ccff;
  border-right-color: #e8eef4;
}
.trow.selected .name-cell {
  background: linear-gradient(90deg, #fff 38px, #99ccff 38px);
}
.blank {
  height: 9px;
}
.hscroll {
  height: 25px;
  display: flex;
  align-items: stretch;
  background: #f0f0f0;
  margin-top: -1px;
  border-top: 1px solid #9a9a9a;
}
.scroll-left {
  width: 28px;
  flex: none;
  position: relative;
}
.scroll-left::after {
  content: "";
  position: absolute;
  left: 10px;
  top: 7px;
  border: 5px solid transparent;
  border-right: 6px solid #222;
  border-left: 0;
}
.scroll-thumb {
  flex: 1;
  box-sizing: border-box;
  background: linear-gradient(#f0f0f0, #d2d2d2 30%, #d2d2d2 80%, #bbb);
  border: 1px solid #aaa;
  border-radius: 3px;
  position: relative;
}
.thumb-grip {
  position: absolute;
  left: 314px;
  top: 5px;
  width: 14px;
  height: 13px;
  background: repeating-linear-gradient(90deg, #555 0 2px, #ddd 2px 4px);
}

.form-row {
  display: flex;
  align-items: flex-end;
  flex: none;
  height: 28px;
  margin-top: 4px;
}
.form-label {
  width: 40px;
  flex: none;
  line-height: 24px;
  font-size: 18px;
  color: #111;
}
.type-row {
  height: 30px;
  margin-top: 4px;
  align-items: center;
}
.type-row .form-label {
  margin-top: -2px;
}
.name-row .form-label {
  margin-bottom: -1px;
}
.formula-row .form-label {
  margin-bottom: -3px;
}
.select-off {
  width: 88px;
  height: 30px;
  box-sizing: border-box;
  display: flex;
  justify-content: space-between;
  padding-left: 3px;
  background: #c8c8c8;
  border: 1px solid #bcbcbc;
  border-radius: 4px;
  color: #9c9c9c;
  line-height: 28px;
  overflow: hidden;
}
.select-off-arrow {
  position: relative;
  width: 25px;
  background: linear-gradient(#f4f4f4, #d8d8d8);
  border-left: 1px solid #b0b0b0;
}
.select-off-arrow::after {
  content: "";
  position: absolute;
  left: 7px;
  top: 11px;
  border: 5px solid transparent;
  border-top: 6px solid #999;
  border-bottom: 0;
}
.field {
  width: 460px;
  height: 28px;
  box-sizing: border-box;
  display: flex;
  align-items: center;
  padding-left: 4px;
  background: #fff;
  border: 1px solid #6c6c6c;
  border-radius: 4px 0 0 4px;
  font-size: 20px;
  color: #111;
}
.caret {
  width: 1px;
  height: 24px;
  background: #111;
  margin-left: 1px;
}

.btnrow {
  display: flex;
  gap: 6.5px;
  margin-top: 4px;
  flex: none;
  height: 30px;
}
.btn {
  width: 30px;
  height: 30px;
  box-sizing: border-box;
  flex: none;
  display: flex;
  align-items: center;
  justify-content: center;
  background: linear-gradient(#f0f0f0, #dcdcdc 45%, #c8c8c8 60%, #e4e4e4);
  border: 1px solid #6c6c6c;
  border-radius: 4px;
}
.btn:first-child {
  margin-right: 3.5px;
}
.btn.active {
  background: linear-gradient(#3a70c8, #5aa8e8 50%, #88e8ff);
  border-color: #4a6a9a;
}
.btn.off {
  border-color: #b8b8b8;
}
.fx {
  font-family: "Liberation Serif", serif;
  font-style: italic;
  font-weight: 700;
  font-size: 15px;
  color: #141460;
}
.tri-up {
  border: 12px solid transparent;
  border-bottom: 11px solid #d81818;
  border-top: 0;
}
.ic-btn {
  width: 26px;
  height: 24px;
}
.split {
  width: 55px;
  height: 30px;
  box-sizing: border-box;
  flex: none;
  display: flex;
  border: 1px solid #555;
  border-radius: 4px;
  overflow: hidden;
}
.split-l {
  width: 30px;
  display: flex;
  align-items: center;
  justify-content: center;
  background: linear-gradient(#f0f0f0, #dcdcdc 45%, #c8c8c8 60%, #e4e4e4);
}
.split-r {
  flex: 1;
  position: relative;
  background: linear-gradient(#2a66c0, #5a98e0 50%, #96d0fa);
}
.split-r::after {
  content: "";
  position: absolute;
  left: 6px;
  top: 11px;
  border: 6px solid transparent;
  border-top: 6px solid #111;
  border-bottom: 0;
}
.dlg-rule {
  height: 1px;
  margin-top: 8px;
  margin-left: -4px;
  background: #c4c4c4;
}
.tooltip {
  position: absolute;
  left: 58px;
  top: 545px;
  width: 52px;
  height: 40px;
  box-sizing: border-box;
  display: flex;
  align-items: center;
  justify-content: center;
  background: #f0f0f0;
  border: 1px solid #d8d8d8;
  border-radius: 6px;
  box-shadow: 2px 2px 3px #777;
  font-size: 17px;
}
.dlg-foot {
  height: 9px;
  flex: none;
  background: #222;
  border-top: 1px solid #000;
  box-sizing: border-box;
}
</style>
